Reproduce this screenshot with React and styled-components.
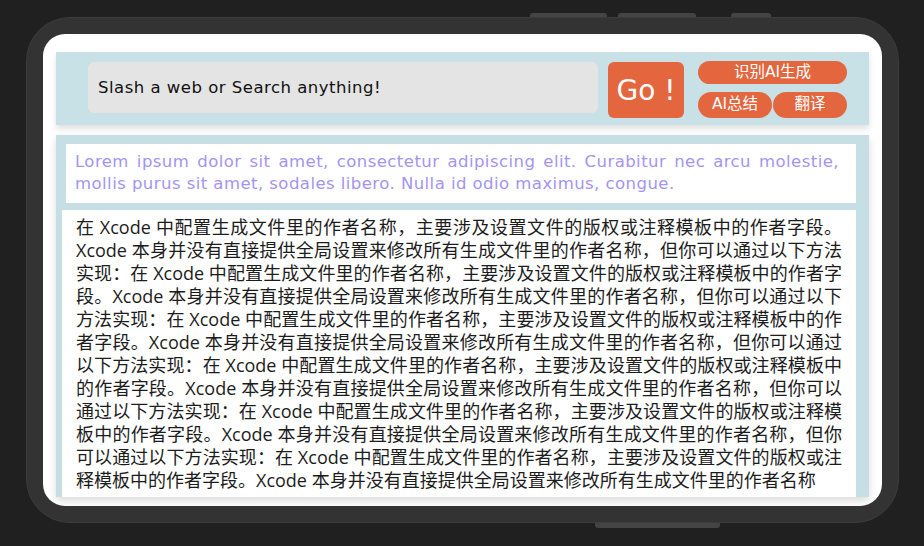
import styled, { createGlobalStyle } from 'styled-components';

const GlobalStyle = createGlobalStyle`
  html, body {
    margin: 0;
    padding: 0;
    background: #202020;
  }
  body {
    font-family: "DejaVu Sans", "Noto Sans CJK SC", sans-serif;
  }
`

const passage = '在 Xcode 中配置生成文件里的作者名称，主要涉及设置文件的版权或注释模板中的作者字段。Xcode 本身并没有直接提供全局设置来修改所有生成文件里的作者名称，但你可以通过以下方法实现：'

export default function App() {
  const article = passage.repeat(6).replace(/，但你可以通过以下方法实现：$/, '')
  return <Stage>
    <GlobalStyle />
    <KeyRow>
      <Key $w={77} $ml={504} />
      <Key $w={78} $ml={11} />
      <Key $w={40} $ml={35} />
    </KeyRow>
    <Device>
      <Screen>
        <Header>
          <SearchInput placeholder='Slash a web or Search anything!' />
          <GoButton>Go !</GoButton>
          <Actions>
            <Pill $span={2} $h={23}>识别AI生成</Pill>
            <Pill $h={26}>AI总结</Pill>
            <Pill $h={26}>翻译</Pill>
          </Actions>
        </Header>
        <Content>
          <Summary>
            Lorem ipsum dolor sit amet, consectetur adipiscing elit. Curabitur nec arcu molestie, mollis purus sit amet, sodales libero. Nulla id odio maximus, congue.
          </Summary>
          <Article>{article}</Article>
        </Content>
      </Screen>
    </Device>
    <KeyRow $bottom>
      <Key $w={125} $ml={569} $bottom />
    </KeyRow>
  </Stage>
}

const Stage = styled.div`
  width: 924px;
  height: 546px;
  box-sizing: border-box;
  padding: 13px 0 0 26px;
  display: flex;
  flex-flow: column;
  overflow: hidden;
`
const KeyRow = styled.div`
  display: flex;
  height: ${p => p.$bottom ? '5px' : '4px'};
`
const Key = styled.div`
  width: ${p => p.$w}px;
  margin-left: ${p => p.$ml}px;
  background: #444;
  border-radius: ${p => p.$bottom ? '0 0 3px 3px' : '3px 3px 0 0'};
`
const Device = styled.div`
  width: 873px;
  height: 506px;
  box-sizing: border-box;
  padding: 16px;
  background: #333;
  border: 1px solid #3c3c3c;
  border-radius: 44px;
  display: flex;
`
const Screen = styled.div`
  flex: 1;
  background: #fff;
  border-radius: 22px;
  overflow: hidden;
  padding: 18px 13px 9px;
  display: flex;
  flex-flow: column;
  row-gap: 10px;
`
const Header = styled.div`
  height: 73px;
  box-sizing: border-box;
  flex-shrink: 0;
  background: #c8e1e6;
  box-shadow: 0 4px 6px rgba(0, 0, 0, 0.12);
  display: flex;
  align-items: flex-start;
  padding: 9px 0 0 32px;
`
const SearchInput = styled.input`
  width: 510px;
  height: 51px;
  margin-top: 1px;
  box-sizing: border-box;
  border: none;
  outline: none;
  border-radius: 6px;
  background: #e4e4e4;
  padding: 0 10px;
  font-family: "DejaVu Sans", sans-serif;
  font-size: 16.5px;
  letter-spacing: 0.5px;
  color: #111;
  &::placeholder {
    color: #111;
  }
`
const GoButton = styled.button`
  width: 76px;
  height: 56px;
  margin: 1px 0 0 10px;
  border: none;
  border-radius: 6px;
  background: #e3663f;
  color: #fff;
  font-family: "DejaVu Sans", sans-serif;
  font-size: 28px;
  padding: 0;
`
const Actions = styled.div`
  display: grid;
  grid-template-columns: 74px 74px;
  column-gap: 1px;
  row-gap: 8px;
  margin-left: 14px;
`
const Pill = styled.button`
  grid-column: span ${p => p.$span || 1};
  height: ${p => p.$h}px;
  border: none;
  border-radius: 13px;
  background: #e3663f;
  color: #fff;
  font-family: "DejaVu Sans", "Noto Sans CJK SC", sans-serif;
  font-size: 15.5px;
  padding: 0;
  line-height: 1;
`
const Content = styled.div`
  height: 362px;
  flex-shrink: 0;
  box-sizing: border-box;
  background: #c6dfe4;
  box-shadow: 0 4px 8px rgba(0, 0, 0, 0.14);
  padding: 9px 13px 0 0;
  display: flex;
  flex-flow: column;
  align-items: flex-end;
  row-gap: 7px;
  overflow: hidden;
`
const Summary = styled.p`
  margin: 0;
  width: 790px;
  box-sizing: border-box;
  background: #fff;
  padding: 7px 17px 8px 9px;
  font-family: "DejaVu Sans", sans-serif;
  font-size: 16.5px;
  letter-spacing: 0.45px;
  line-height: 22px;
  color: #a494ef;
  text-align: justify;
`
const Article = styled.p`
  margin: 0;
  width: 794px;
  flex-shrink: 0;
  box-sizing: border-box;
  background: #fff;
  padding: 6px 14px 10px 14px;
  font-family: "Open Sans", "Noto Sans CJK SC", sans-serif;
  font-size: 18px;
  line-height: 23px;
  color: #1c1c1c;
  text-align: justify;
`
